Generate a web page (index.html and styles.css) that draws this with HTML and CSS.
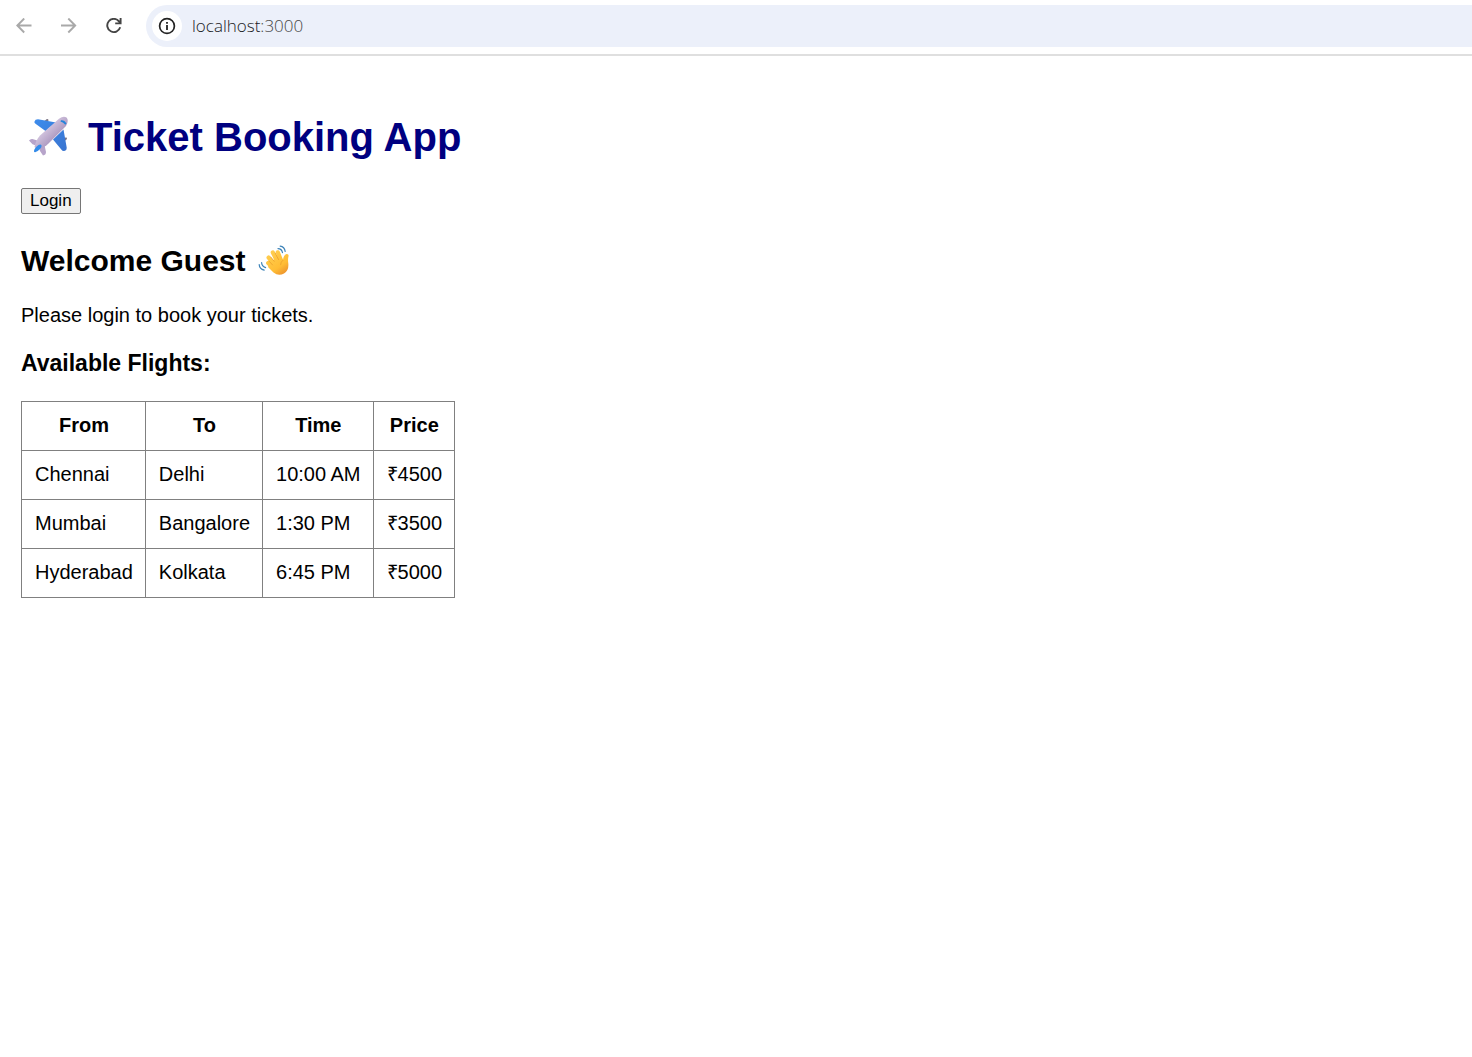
FILE: index.html
```html
<!DOCTYPE html>
<html lang="en">
<head>
<meta charset="utf-8">
<title>Ticket Booking App</title>
<link rel="stylesheet" href="styles.css">
</head>
<body>
<header class="toolbar">
  <nav class="nav-buttons" aria-label="Browser navigation">
    <button class="nav-button" type="button" aria-label="Back" disabled>
      <svg viewBox="0 0 16 16" width="16" height="16" fill="none" stroke="currentColor" stroke-width="1.9"><path d="M15.500 7.500H1.500M8.200.5l-6.900 7 6.900 7"/></svg>
    </button>
    <button class="nav-button" type="button" aria-label="Forward" disabled>
      <svg viewBox="0 0 16 16" width="16" height="16" fill="none" stroke="currentColor" stroke-width="1.9"><path d="M0 7.500h14M7.300.5l6.900 7-6.900 7"/></svg>
    </button>
    <button class="nav-button nav-reload" type="button" aria-label="Reload">
      <svg viewBox="0 0 16 16" width="16" height="16" fill="none" stroke="currentColor" stroke-width="1.9"><path d="M14.200 9.300A6.600 6.600 0 1 1 13 3.300l1.300 1.800M14.600 0v5.400H9.200"/></svg>
    </button>
  </nav>
  <div class="address-bar">
    <button class="site-info" type="button" aria-label="Site information">
      <svg viewBox="0 0 18 18" width="18" height="18"><circle cx="9" cy="9" r="7.400" fill="none" stroke="currentColor" stroke-width="1.700"/><path d="M8.100 8h1.800v5H8.100zM8.100 5h1.800v1.700H8.100z" fill="currentColor"/></svg>
    </button>
    <span class="address">localhost<span class="port">:3000</span></span>
  </div>
</header>
<main class="page">
  <h1 class="title">
    <svg class="plane" viewBox="0 0 42 42" width="42" height="42" aria-hidden="true">
      <defs>
        <linearGradient id="hull" x1="0" y1="0" x2="1" y2="1"><stop offset=".3" stop-color="#d8cbe3"/><stop offset=".65" stop-color="#ab97bf"/></linearGradient>
        <linearGradient id="wing" x1="0" y1="0" x2="1" y2="1"><stop stop-color="#3d8cec"/><stop offset="1" stop-color="#3974d0"/></linearGradient>
      </defs>
      <path d="M16.500 5l2-1.800q2-.4 2 1.300L19 7zM36 22.500l2-1.200q1.500.4.8 2L36.500 25z" fill="#7c7483"/>
      <path d="M6.500 5.500Q7 3.200 10 3.200L28 6.500 17.500 15 7.500 7.800Q6 6.800 6.500 5.500zM35.500 13.500l3.200 18q.2 3-2.500 3.500-1.800.2-2.700-1.200L25 23.500z" fill="url(#wing)"/>
      <path d="M1 24.500q1.500-2 3.500-1.500l8 2.500-2 5-6-2.200zM11 31.500l5.500-2.500 1.500 7q0 3-3 3.500l-3-4.500z" fill="#b7a4ca"/>
      <path d="M38.800 1.800Q35.500-.5 31 2.800L12 19.500Q8 24 6.500 31l3 2.800q7-2.300 11-6.300l17.500-17.500Q41 5 38.800 1.800z" fill="url(#hull)"/>
      <path d="M6 35.500q-.3-3 4.500-6.500 2-1.200 3 .2.700 1.700-1.500 3.800-3 3.300-5 3.200-.9 0-1-.7z" fill="#338be9"/>
      <path d="M33 4.200q3.500-.4 5.500 3.300l-1.200 1.200q-1.800-2.500-4.800-3.200z" fill="#2384dc"/>
    </svg>
    Ticket Booking App
  </h1>
  <button class="login" type="button">Login</button>
  <h2 class="welcome">
    Welcome Guest
    <svg class="wave" viewBox="0 0 32 32" width="32" height="32" aria-hidden="true">
      <defs><linearGradient id="skin" gradientUnits="userSpaceOnUse" x1="10" y1="6" x2="28" y2="30"><stop stop-color="#ffd052"/><stop offset=".65" stop-color="#ffbd35"/><stop offset="1" stop-color="#e98b2c"/></linearGradient></defs>
      <path d="M10.600 12.600l6 7M14.800 7.500l4.500 9M19.800 7.300l3.200 8M10.200 18l6 6" fill="none" stroke="url(#skin)" stroke-width="4.200" stroke-linecap="round"/>
      <path d="M12 17l10-6 3 4q.5-5 3.500-6 2.500-.3 2 2.300-.8 3-.2 7.200.7 7-4.300 10-5.500 3-10.500-1L10 22z" fill="url(#skin)"/>
      <path d="M12.800 12l3.400 4.300M17.300 8.200l3.200 6.300M11.300 16.400l3.200 3.500M25 15.200q-2.500 1.500-2.400 4.500" fill="none" stroke="#eba02c" stroke-width=".8" stroke-linecap="round"/>
      <path d="M20 3.600q3.700 0 4.500 4M22.200 1.200q4.300.6 5 5.300M3.600 17.600q0 3.600 4 5M1.200 19.600q.2 4.200 5 5.600" fill="none" stroke="#3d83b8" stroke-width="1.200" stroke-linecap="round"/>
    </svg>
  </h2>
  <p class="message">Please login to book your tickets.</p>
  <h3 class="flights-heading">Available Flights:</h3>
  <table class="flights">
    <thead>
      <tr><th scope="col">From</th><th scope="col">To</th><th scope="col">Time</th><th scope="col">Price</th></tr>
    </thead>
    <tbody>
      <tr><td>Chennai</td><td>Delhi</td><td>10:00 AM</td><td>₹4500</td></tr>
      <tr><td>Mumbai</td><td>Bangalore</td><td>1:30 PM</td><td>₹3500</td></tr>
      <tr><td>Hyderabad</td><td>Kolkata</td><td>6:45 PM</td><td>₹5000</td></tr>
    </tbody>
  </table>
</main>
</body>
</html>
```
FILE: styles.css
```css
* {
  box-sizing: border-box;
}

body {
  margin: 0;
  background: #fff;
  color: #000;
  font: 20px/24px "Liberation Sans", Arial, sans-serif;
}

svg {
  display: block;
  flex: none;
}

.toolbar {
  display: flex;
  align-items: center;
  gap: 24px;
  padding: 5px 0 7px 16px;
  border-bottom: 2px solid #dfdfdf;
}

.nav-buttons {
  display: flex;
  gap: 29px;
}

.nav-button,
.site-info {
  padding: 0;
  border: 0;
  background: none;
  color: #a9a9a9;
}

.nav-reload {
  color: #444;
}

.address-bar {
  display: flex;
  flex: 1;
  align-items: center;
  gap: 10px;
  height: 42px;
  padding-left: 6px;
  border-radius: 21px 0 0 21px;
  background: #ecf0fa;
}

.site-info {
  display: flex;
  align-items: center;
  justify-content: center;
  width: 30px;
  height: 30px;
  border-radius: 50%;
  background: #fff;
  color: #222;
}

.address {
  color: #202124;
  font: 300 17px/24px "Open Sans", "Noto Sans", sans-serif;
}

.port {
  color: #474747;
}

.page {
  padding: 57px 21px 24px;
}

.title {
  display: flex;
  align-items: center;
  gap: 18px;
  margin: 0 0 27px;
  padding-left: 7px;
  color: #000080;
  font-size: 40px;
  line-height: 48px;
}

.login {
  display: block;
  height: 26px;
  padding: 0 8px;
  border: 1px solid #767676;
  border-radius: 2px;
  background: #efefef;
  color: #000;
  font: 17px/20px "Liberation Sans", Arial, sans-serif;
}

.welcome {
  display: flex;
  align-items: center;
  gap: 12px;
  margin: 29px 0 24px;
  font-size: 30px;
  line-height: 36px;
}

.message {
  margin: 0 0 22px;
}

.flights-heading {
  margin: 0 0 24px;
  font-size: 23px;
  line-height: 28px;
}

.flights {
  border-collapse: collapse;
}

.flights th,
.flights td {
  padding: 11px 12px 13px 13px;
  border: 1px solid #808080;
}
```
